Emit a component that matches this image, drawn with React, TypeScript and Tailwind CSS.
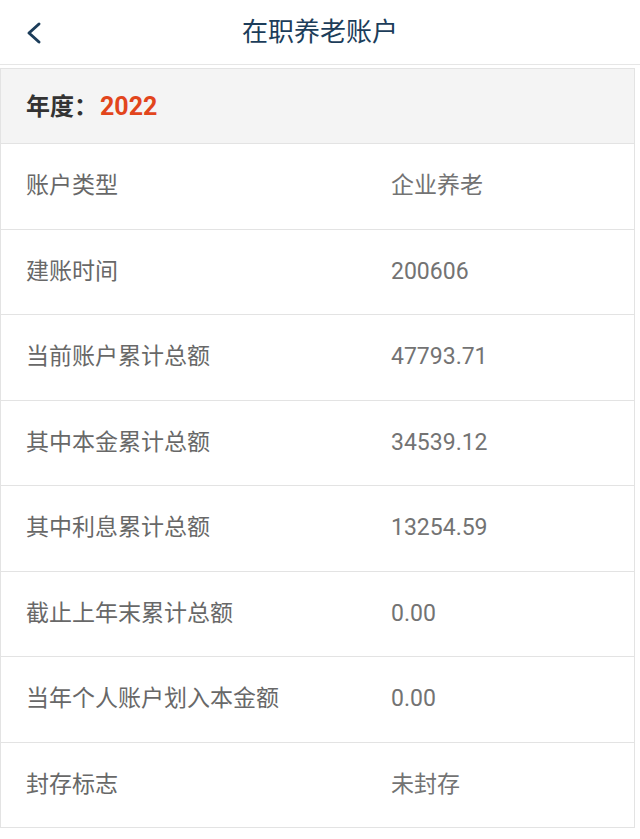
const rows: [string, string][] = [
  ['账户类型', '企业养老'],
  ['建账时间', '200606'],
  ['当前账户累计总额', '47793.71'],
  ['其中本金累计总额', '34539.12'],
  ['其中利息累计总额', '13254.59'],
  ['截止上年末累计总额', '0.00'],
  ['当年个人账户划入本金额', '0.00'],
  ['封存标志', '未封存'],
]

export default function App() {
  return (
    <div className="w-[640px] h-[839px] bg-white font-['Roboto','Noto_Sans_CJK_SC',sans-serif] overflow-hidden">
      <div className="relative h-[65px] flex items-center justify-center border-b border-[#e6e6e6]">
        <svg className="absolute left-[24px] top-[21px]" width="20" height="24" viewBox="0 0 20 24">
          <polyline points="15,3 5,12 15,21" fill="none" stroke="#1c3d5a" strokeWidth="3" strokeLinecap="round" strokeLinejoin="round" />
        </svg>
        <h1 className="text-[26px] text-[#1c3d5a]">在职养老账户</h1>
      </div>
      <div className="mt-[3px] mr-[5px] border border-b-0 border-[#e3e3e3]">
        <div className="h-[75px] flex items-center pl-[25px] bg-[#f4f4f4] border-b border-[#e3e3e3] text-[24px] font-bold pt-[1px]">
          <span className="text-[#333]">年度：</span>
          <span className="ml-[2px] text-[#e2451c] text-[25px]">2022</span>
        </div>
        {rows.map(([k, v]) => (
          <div key={k} className="h-[85.5px] flex items-center pl-[25px] border-b border-[#e3e3e3] text-[23px]">
            <span className="w-[365px] text-[#686868]">{k}</span>
            <span className="text-[#737373]">{v}</span>
          </div>
        ))}
      </div>
    </div>
  )
}
